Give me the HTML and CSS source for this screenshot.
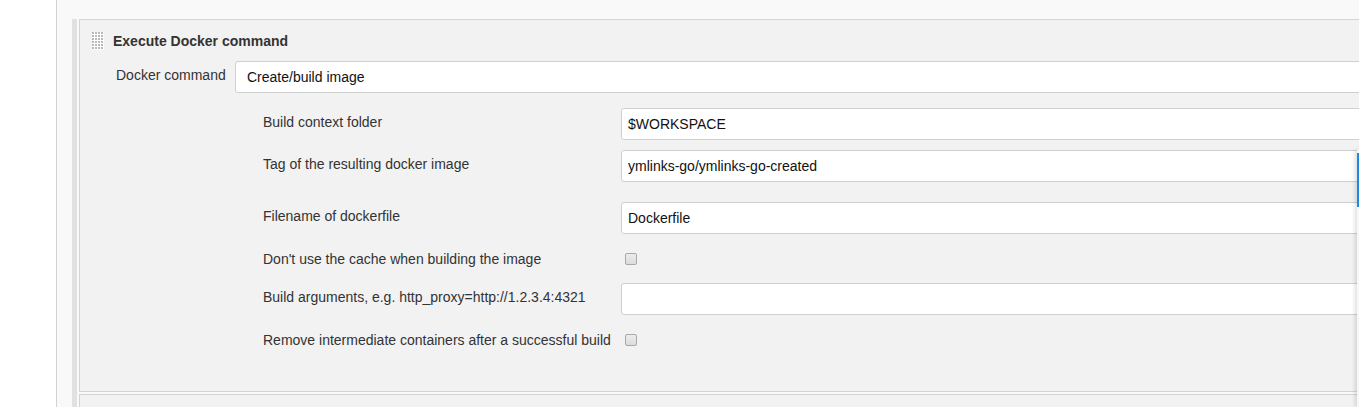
FILE: index.html
```html
<!DOCTYPE html>
<html lang="en">
<head>
    <meta charset="UTF-8">
    <title>Execute Docker command</title>
    <link rel="stylesheet" href="styles.css">
</head>
<body>
    <div class="main-panel">
        <div class="chunk-list">
            <div class="chunk">
                <div class="chunk-header">
                    <svg class="drag-handle" width="12" height="18" viewBox="0 0 12 18">
                        <rect width="12" height="18" fill="#ffffff"/>
                        <g fill="#b9b9b9">
                            <rect x="0" y="0" width="2" height="2"/><rect x="3" y="0" width="2" height="2"/><rect x="6" y="0" width="2" height="2"/><rect x="9" y="0" width="2" height="2"/>
                            <rect x="0" y="3" width="2" height="2"/><rect x="3" y="3" width="2" height="2"/><rect x="6" y="3" width="2" height="2"/><rect x="9" y="3" width="2" height="2"/>
                            <rect x="0" y="6" width="2" height="2"/><rect x="3" y="6" width="2" height="2"/><rect x="6" y="6" width="2" height="2"/><rect x="9" y="6" width="2" height="2"/>
                            <rect x="0" y="9" width="2" height="2"/><rect x="3" y="9" width="2" height="2"/><rect x="6" y="9" width="2" height="2"/><rect x="9" y="9" width="2" height="2"/>
                            <rect x="0" y="12" width="2" height="2"/><rect x="3" y="12" width="2" height="2"/><rect x="6" y="12" width="2" height="2"/><rect x="9" y="12" width="2" height="2"/>
                            <rect x="0" y="15" width="2" height="2"/><rect x="3" y="15" width="2" height="2"/><rect x="6" y="15" width="2" height="2"/><rect x="9" y="15" width="2" height="2"/>
                        </g>
                    </svg>
                    <b>Execute Docker command</b>
                </div>

                <div class="row row-top">
                    <div class="row-label top-label">Docker command</div>
                    <div class="row-field">
                        <div class="select">Create/build image</div>
                    </div>
                </div>

                <div class="nested">
                    <div class="row">
                        <div class="row-label">Build context folder</div>
                        <div class="row-field"><input class="text-box" type="text" value="$WORKSPACE"></div>
                    </div>
                    <div class="row row-spaced">
                        <div class="row-label">Tag of the resulting docker image</div>
                        <div class="row-field"><input class="text-box" type="text" value="ymlinks-go/ymlinks-go-created"></div>
                    </div>
                    <div class="row">
                        <div class="row-label">Filename of dockerfile</div>
                        <div class="row-field"><input class="text-box" type="text" value="Dockerfile"></div>
                    </div>
                    <div class="row row-check">
                        <div class="row-label">Don't use the cache when building the image</div>
                        <div class="row-field"><input class="check" type="checkbox"></div>
                    </div>
                    <div class="row">
                        <div class="row-label">Build arguments, e.g. http_proxy=http://1.2.3.4:4321</div>
                        <div class="row-field"><input class="text-box" type="text" value=""></div>
                    </div>
                    <div class="row row-check">
                        <div class="row-label">Remove intermediate containers after a successful build</div>
                        <div class="row-field"><input class="check" type="checkbox"></div>
                    </div>
                </div>
            </div>
            <div class="chunk chunk-next"></div>
        </div>
    </div>

    <!-- side drawer peeking in from the right -->
    <div class="side-drawer"><div class="side-drawer-mark"></div></div>
</body>
</html>
```

FILE: styles.css
```css
/* General */
html, body {
    overflow: hidden;
}

body {
    margin: 0;
    background: #ffffff;
    font-family: "Liberation Sans", Arial, Helvetica, sans-serif;
    font-size: 14px;
    color: #333;
    height: 407px;
}

.main-panel {
    margin-left: 56px;
    border-left: 1px solid #d2d2d2;
    background: #f9f9f9;
    padding: 19px 0 0 15px;
    height: 100%;
    box-sizing: border-box;
    overflow: hidden;
}

/* Repeated chunks */
.chunk-list {
    border-left: 5px solid #e1e1e1;
    padding-left: 2px;
    height: 100%;
    width: 1400px;
}

.chunk {
    border: 1px solid #d4d4d4;
    border-right: none;
    background: #f2f2f2;
    padding: 12px 0 37px 0;
}

.chunk-next {
    margin-top: 2px;
    height: 40px;
    padding: 0;
}

.chunk-header {
    display: flex;
    align-items: center;
    padding-left: 12px;
    height: 18px;
    margin-bottom: 11px;
}

.drag-handle {
    display: block;
    margin-right: 9px;
}

.chunk-header b {
    font-size: 14px;
    line-height: 18px;
    color: #333;
}

/* Rows */
.row {
    display: flex;
    margin-bottom: 10px;
}

.row:last-child {
    margin-bottom: 0;
}

.row-top {
    margin-bottom: 15px;
    padding-left: 36px;
}

.row-spaced {
    margin-bottom: 20px;
}

.row-label {
    width: 358px;
    flex-shrink: 0;
    padding-top: 5px;
    line-height: 18px;
}

.top-label {
    width: 119px;
}

.row-field {
    flex: 1;
}

.nested {
    padding-left: 183px;
}

.row-check {
    height: 29px;
    align-items: center;
}

.row-check .row-label {
    padding-top: 0;
}

.row-check .row-field {
    display: flex;
    align-items: center;
}

/* Controls */
.select,
.text-box {
    display: block;
    width: 100%;
    height: 32px;
    box-sizing: border-box;
    background: #fff;
    border: 1px solid #cfcfcf;
    border-radius: 3px;
    font-family: inherit;
    font-size: 14px;
    color: #111;
}

.select {
    padding: 0 11px;
    line-height: 30px;
}

.text-box {
    padding: 0 6px;
    outline: none;
}

.check {
    appearance: none;
    -webkit-appearance: none;
    margin: 0 0 0 4px;
    width: 12px;
    height: 12px;
    border: 1px solid #a9a9a9;
    border-radius: 2px;
    background: linear-gradient(#ececec, #dcdcdc);
}

/* Drawer edge at the right */
.side-drawer {
    position: fixed;
    left: 1357px;
    top: 150px;
    bottom: 0;
    width: 2px;
    background: #f7f7f7;
    box-shadow: -1px 0 4px rgba(0, 0, 0, 0.28);
}

.side-drawer-mark {
    margin-top: 3px;
    width: 2px;
    height: 54px;
    background: #1e88e5;
}
```
